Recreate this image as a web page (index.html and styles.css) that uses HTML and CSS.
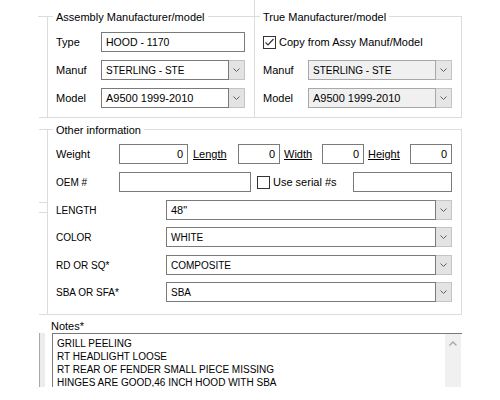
FILE: index.html
```html
<!DOCTYPE html>
<html>
<head>
<meta charset="utf-8">
<link rel="stylesheet" href="styles.css">
</head>
<body>
<div class="form">
  <div class="top">
    <div class="group g1">
      <div class="legend">Assembly Manufacturer/model</div>
      <div class="rows">
        <div class="row"><span class="lbl w45">Type</span><span class="tb f144 caps-d">HOOD - 1170</span></div>
        <div class="row"><span class="lbl w45">Manuf</span><span class="dd f144"><span class="dd-text caps">STERLING - STE</span><span class="dd-btn"><svg width="7" height="4" viewBox="0 0 7 4"><path d="M0.5 0.5 L3.5 3.5 L6.5 0.5" fill="none" stroke="#606060"/></svg></span></span></div>
        <div class="row"><span class="lbl w45">Model</span><span class="dd f144"><span class="dd-text">A9500 1999-2010</span><span class="dd-btn"><svg width="7" height="4" viewBox="0 0 7 4"><path d="M0.5 0.5 L3.5 3.5 L6.5 0.5" fill="none" stroke="#606060"/></svg></span></span></div>
      </div>
    </div>
    <div class="group g2">
      <div class="legend">True Manufacturer/model</div>
      <div class="rows">
        <div class="row"><span class="chk"><svg width="11" height="11" viewBox="0 0 11 11"><path d="M1.5 5.5 L4 8 L9.5 2" fill="none" stroke="#333" stroke-width="1.2"/></svg></span><span class="chk-text">Copy from Assy Manuf/Model</span></div>
        <div class="row"><span class="lbl w45">Manuf</span><span class="dd f144 disabled"><span class="dd-text caps">STERLING - STE</span><span class="dd-btn"><svg width="7" height="4" viewBox="0 0 7 4"><path d="M0.5 0.5 L3.5 3.5 L6.5 0.5" fill="none" stroke="#606060"/></svg></span></span></div>
        <div class="row"><span class="lbl w45">Model</span><span class="dd f144 disabled"><span class="dd-text">A9500 1999-2010</span><span class="dd-btn"><svg width="7" height="4" viewBox="0 0 7 4"><path d="M0.5 0.5 L3.5 3.5 L6.5 0.5" fill="none" stroke="#606060"/></svg></span></span></div>
      </div>
    </div>
  </div>

  <div class="group g3">
    <div class="legend">Other information</div>
    <div class="rows">
      <div class="row">
        <span class="lbl w63">Weight</span>
        <span class="tb num w69">0</span>
        <span class="link w50 p5">Length</span>
        <span class="tb num w42">0</span>
        <span class="link w42 p4">Width</span>
        <span class="tb num w42">0</span>
        <span class="link w46 p4">Height</span>
        <span class="tb num w42">0</span>
      </div>
      <div class="row">
        <span class="lbl w63 caps">OEM #</span>
        <span class="tb w132"></span>
        <span class="chk off"></span>
        <span class="chk-text">Use serial #s</span>
        <span class="tb w99 push"></span>
      </div>
      <div class="row">
        <span class="lbl w110 caps">LENGTH</span>
        <span class="dd f286"><span class="dd-text">48"</span><span class="dd-btn"><svg width="7" height="4" viewBox="0 0 7 4"><path d="M0.5 0.5 L3.5 3.5 L6.5 0.5" fill="none" stroke="#606060"/></svg></span></span>
      </div>
      <div class="row t7">
        <span class="lbl w110 caps">COLOR</span>
        <span class="dd f286"><span class="dd-text caps">WHITE</span><span class="dd-btn"><svg width="7" height="4" viewBox="0 0 7 4"><path d="M0.5 0.5 L3.5 3.5 L6.5 0.5" fill="none" stroke="#606060"/></svg></span></span>
      </div>
      <div class="row">
        <span class="lbl w110 caps">RD OR SQ*</span>
        <span class="dd f286"><span class="dd-text caps">COMPOSITE</span><span class="dd-btn"><svg width="7" height="4" viewBox="0 0 7 4"><path d="M0.5 0.5 L3.5 3.5 L6.5 0.5" fill="none" stroke="#606060"/></svg></span></span>
      </div>
      <div class="row t7">
        <span class="lbl w110 caps">SBA OR SFA*</span>
        <span class="dd f286"><span class="dd-text caps">SBA</span><span class="dd-btn"><svg width="7" height="4" viewBox="0 0 7 4"><path d="M0.5 0.5 L3.5 3.5 L6.5 0.5" fill="none" stroke="#606060"/></svg></span></span>
      </div>
    </div>
  </div>

  <div class="notes">
    <span class="ghost"></span>
    <div class="notes-col">
      <div class="notes-lbl">Notes*</div>
      <div class="memo">
        <div class="memo-text caps">GRILL PEELING<br>RT HEADLIGHT LOOSE<br>RT REAR OF FENDER SMALL PIECE MISSING<br>HINGES ARE GOOD,46 INCH HOOD WITH SBA</div>
        <div class="vscroll"><svg width="8" height="5" viewBox="0 0 8 5"><path d="M0.5 4.5 L4 1 L7.5 4.5" fill="none" stroke="#a6a6a6" stroke-width="1.3"/></svg></div>
      </div>
    </div>
  </div>
</div>
</body>
</html>
```

FILE: styles.css
```css
* { box-sizing: border-box; }
html, body { margin: 0; background: #fff; }
body {
  font-family: "Liberation Sans", Arial, sans-serif;
  font-size: 11px;
  color: #000;
  width: 500px;
  height: 400px;
  overflow: hidden;
}
.form { padding: 16px 0 0 47px; width: 462px; }
.top { display: flex; }

.group { position: relative; border: 1px solid #dcdcdc; }
.g1 { width: 208px; padding: 0 9px 9px 8px; }
.g2 { width: 207px; border-left: none; padding: 0 9px 9px 8px; }
.g3 { width: 415px; margin-top: 11px; padding: 0 9px 12px 8px; }

/* stray edge lines from neighbouring frames */
.g1::before, .g3::before {
  content: ""; position: absolute; top: -1px; left: -10px;
  width: 9px; height: 1px; background: #dcdcdc;
}
.g3::before { left: -9px; width: 8px; box-shadow: 0 73px 0 #dcdcdc, 0 83px 0 #dcdcdc; }
.g1::after, .g3::after {
  content: ""; position: absolute; bottom: -1px; left: -9px;
  width: 8px; height: 1px; background: #dcdcdc;
}
.g2::before {
  content: ""; position: absolute; top: -17px; left: -1px;
  width: 1px; height: 16px; background: #dcdcdc;
}

.legend {
  width: max-content;
  margin: -7px 0 0 -3px;
  padding: 0 3px;
  background: #fff;
  line-height: 14px;
  height: 14px;
}
.rows { display: flex; flex-direction: column; gap: 8px; margin-top: 8px; }
.g3 .rows { margin-top: 7px; }
.row { display: flex; align-items: center; height: 20px; flex: none; }
.row.t7 { margin-top: -1px; }

.lbl { flex: none; }
.w45 { width: 45px; }
.w63 { width: 63px; }
.w110 { width: 110px; }
.caps { font-size: 10px; }
.caps-d { font-size: 10.5px; }

.tb {
  flex: none;
  height: 20px;
  border: 1px solid #7a7a7a;
  background: #fff;
  padding: 0 4px;
  display: flex;
  align-items: center;
  white-space: nowrap;
}
.num { justify-content: flex-end; font-size: 11px; }
.f144 { width: 144px; }
.f286 { width: 286px; }
.w69 { width: 69px; }
.w42 { width: 42px; }
.w132 { width: 132px; }
.w99 { width: 99px; }
.w50 { width: 50px; }
.w46 { width: 46px; }
.push { margin-left: auto; }

.link { flex: none; text-decoration: underline; }
.p5 { padding-left: 5px; }
.p4 { padding-left: 4px; }

.dd { flex: none; display: flex; height: 20px; }
.dd-text {
  flex: 1;
  border: 1px solid #7a7a7a;
  background: #fff;
  padding: 0 4px;
  display: flex;
  align-items: center;
  white-space: nowrap;
  overflow: hidden;
}
.dd-btn {
  flex: none;
  width: 16px;
  border: 1px solid #c4c4c4;
  border-left: none;
  background: #e3e3e3;
  display: flex;
  align-items: center;
  justify-content: center;
}
.dd.disabled .dd-text { background: #f0f0f0; border-color: #a8a8a8; }
.dd.disabled .dd-btn { background: #e6e6e6; border-color: #c4c4c4; }

.chk {
  flex: none;
  width: 13px; height: 13px;
  border: 1px solid #333;
  background: #fff;
  display: flex;
  align-items: center;
  justify-content: center;
}
.g3 .chk { margin-left: 6px; }
.chk-text { margin-left: 3px; white-space: nowrap; }

.notes { display: flex; align-items: flex-end; margin: 5px 0 0 -8px; }
.ghost {
  flex: none;
  width: 6px; height: 54px;
  border-left: 1px solid #a8a8a8;
  background: #ececec;
}
.notes-col { margin-left: 6px; }
.notes-lbl { line-height: 13px; height: 13px; }
.memo {
  margin-left: 1px;
  width: 410px;
  height: 54px;
  border-top: 1px solid #7a7a7a;
  border-left: 1px solid #7a7a7a;
  display: flex;
  overflow: hidden;
}
.memo-text { flex: 1; padding: 3px 0 0 4px; line-height: 13px; white-space: nowrap; }
.vscroll {
  flex: none;
  width: 16px;
  margin-right: 1px;
  background: #f0f0f0;
  display: flex;
  justify-content: center;
  align-items: flex-start;
  padding-top: 7px;
}
```
